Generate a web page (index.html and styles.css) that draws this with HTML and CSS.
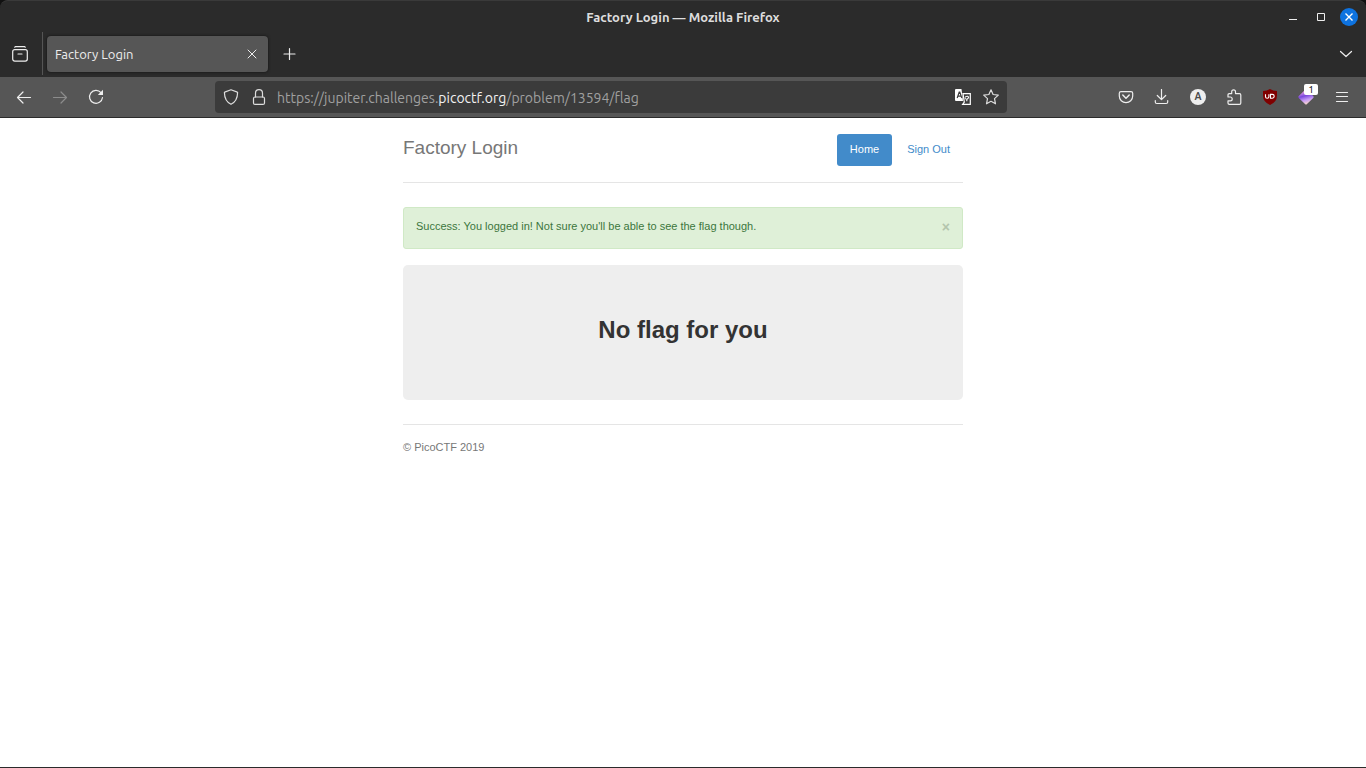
FILE: index.html
```html
<!DOCTYPE html>
<html lang="en">
<head>
<meta charset="utf-8">
<title>Factory Login</title>
<link rel="stylesheet" href="styles.css">
</head>
<body>
<div class="window">
  <div class="chrome">
    <div class="titlebar">
      <span class="titlebar-text">Factory Login — Mozilla Firefox</span>
      <div class="window-controls">
        <button class="win-btn" aria-label="Minimize"><svg width="18" height="18" viewBox="0 0 18 18"><path d="M5 11.500h8" stroke="#eee" fill="none"/></svg></button>
        <button class="win-btn" aria-label="Maximize"><svg width="18" height="18" viewBox="0 0 18 18"><path d="M5.500 5.500h7v7h-7z" stroke="#eee" fill="none"/></svg></button>
        <button class="win-btn win-close" aria-label="Close"><svg width="18" height="18" viewBox="0 0 18 18"><path d="M5.500 5.500l7 7M12.500 5.500l-7 7" stroke="#fff" stroke-width="1.400" fill="none"/></svg></button>
      </div>
    </div>
    <div class="tabs">
      <button class="icon-btn view-btn" aria-label="Recent browsing"><svg class="icon" viewBox="0 0 16 16"><path d="M2.700 1.200l.9-.6h8.800l.9.600"/><rect x=".7" y="3.700" width="14.600" height="11.400" rx="2"/><path d="M6 8h4"/></svg></button>
      <div class="tab">
        <span class="tab-title">Factory Login</span>
        <button class="tab-close" aria-label="Close tab"><svg width="16" height="16" viewBox="0 0 16 16" class="icon thin"><path d="M4 4l8 8M12 4l-8 8"/></svg></button>
      </div>
      <button class="icon-btn new-tab" aria-label="New tab"><svg class="icon" viewBox="0 0 16 16"><path d="M7.500 2.500v11M2 8h11"/></svg></button>
      <button class="icon-btn tab-list" aria-label="List all tabs"><svg class="icon" viewBox="0 0 16 16"><path d="M2.500 5.500l5.500 5 5.500-5"/></svg></button>
    </div>
    <div class="toolbar">
      <button class="icon-btn" aria-label="Back"><svg class="icon" viewBox="0 0 16 16"><path d="M14.500 8.500H1.500M7 3L1.500 8.500 7 14"/></svg></button>
      <button class="icon-btn dim" aria-label="Forward"><svg class="icon" viewBox="0 0 16 16"><path d="M1.500 8.500h13M9 3l5.500 5.500L9 14"/></svg></button>
      <button class="icon-btn" aria-label="Reload"><svg class="icon" viewBox="0 0 16 16"><path d="M13 3.600A6.500 6.500 0 1 0 14.500 8.500"/><path class="solid" d="M15 .8v5.200h-5.200z"/></svg></button>
      <div class="urlbar">
        <button class="url-btn" aria-label="Tracking protection"><svg class="icon" viewBox="0 0 16 16"><path d="M8 .8L14.300 3.100Q14.600 3.200 14.600 3.600C14.500 9 12.500 13.300 8 15.300C3.500 13.300 1.500 9 1.400 3.600Q1.400 3.200 1.700 3.100z"/></svg></button>
        <button class="url-btn" aria-label="Site information"><svg class="icon" viewBox="0 0 16 16"><path d="M4.500 8V4.200a3.500 3.500 0 0 1 7 0V8"/><rect x="2.500" y="8" width="11" height="7.400" rx="1.500"/></svg></button>
        <div class="url" role="textbox" aria-label="Address" contenteditable="true" spellcheck="false">https://jupiter.challenges.<span class="host">picoctf.org</span>/problem/13594/flag</div>
        <button class="url-btn" aria-label="Translate page"><svg width="16" height="16" viewBox="0 0 16 16"><path d="M1 0h5.500l1.500 12H1a1 1 0 0 1-1-1V1a1 1 0 0 1 1-1z" fill="#fff"/><path d="M2.200 9L4.200 3h.6l2 6M2.800 7.200h3.400" stroke="#3b3b3b" stroke-width="1.200" fill="none"/><path d="M8 4.600h7.300v10.800H7.600L9.300 13z" stroke="#fff" stroke-width="1.200" fill="none"/><path d="M10 8.500q.8-1.500 2.500-1.200 1.500.4.800 1.800-.5 1-1.500 1.200v2M9.700 9.800h1.500" stroke="#fff" stroke-width="1.100" fill="none"/></svg></button>
        <button class="url-btn" aria-label="Bookmark this page"><svg class="icon" viewBox="0 0 16 16"><path d="M8 .8l2.100 4.700 5.200.6-3.800 3.500 1 5.200L8 12.300l-4.500 2.500 1-5.200L.7 6.100l5.200-.6z"/></svg></button>
      </div>
      <button class="icon-btn" aria-label="Save to Pocket"><svg class="icon" viewBox="0 0 16 16"><path d="M3 2.600h10a1.700 1.700 0 0 1 1.700 1.700V7a6.700 6.700 0 0 1-13.400 0V4.300A1.700 1.700 0 0 1 3 2.600z"/><path d="M4.800 6L8 9.200 11.200 6" stroke-width="1.500"/></svg></button>
      <button class="icon-btn" aria-label="Downloads"><svg class="icon" viewBox="0 0 16 16"><path d="M7.500.5v10M3.300 6.500l4.200 4.200 4.200-4.200M1.300 11.500v1.500a1.500 1.500 0 0 0 1.500 1.500h9.400a1.500 1.500 0 0 0 1.500-1.500v-1.500"/></svg></button>
      <button class="icon-btn account" aria-label="Account"><span class="avatar">A</span></button>
      <button class="icon-btn" aria-label="Extensions"><svg class="icon" viewBox="0 0 16 16"><path d="M5.700 4.600V2.700a1.900 1.900 0 0 1 3.800 0v1.900h4q1.300 0 1.300 1.300V14q0 1.300-1.300 1.300H3.300q-1.300 0-1.300-1.300v-2.200h2.300a1.900 1.900 0 0 0 0-3.800H2V5.900q0-1.300 1.300-1.300z"/></svg></button>
      <button class="icon-btn" aria-label="uBlock Origin"><svg width="16" height="16" viewBox="0 0 16 16"><path d="M8 0Q11 2 15 2V6.500Q15 13 8 16Q1 13 1 6.500V2Q5 2 8 0z" fill="#800000"/><path d="M3.500 5.200v2.600q0 1.400 1.700 1.400t1.700-1.400V5.200M8.500 5.400v3.800h1.800a1.900 1.900 0 0 0 0-3.800z" stroke="#fff" stroke-width="1.100" fill="none"/></svg></button>
      <button class="icon-btn ext" aria-label="Extension, 1 notification"><svg width="16" height="16" viewBox="0 0 16 16"><defs><linearGradient id="g" gradientUnits="userSpaceOnUse" x1="5" y1="2" x2="9" y2="16"><stop offset="0" stop-color="#f0a4e4"/><stop offset=".35" stop-color="#7a48dc"/><stop offset=".65" stop-color="#c79cf8"/><stop offset="1" stop-color="#ffe0c0"/></linearGradient></defs><path d="M7 .9q1-1 2 0l6.200 6.200q.9.900 0 1.800L9 15.100q-1 1-2 0L.8 8.900q-.9-.9 0-1.800z" fill="url(#g)"/></svg><span class="badge">1</span></button>
      <button class="icon-btn" aria-label="Open menu"><svg class="icon" viewBox="0 0 16 16"><path d="M2.500 3.500h11M2.500 7.500h11M2.500 12.500h11"/></svg></button>
    </div>
  </div>
  <main class="page">
    <div class="container">
      <header class="site-header">
        <h3 class="brand">Factory Login</h3>
        <nav class="pills"><a class="pill active" href="#">Home</a><a class="pill" href="#">Sign Out</a></nav>
      </header>
      <div class="alert" role="alert"><span>Success: You logged in! Not sure you'll be able to see the flag though.</span><button class="alert-close" aria-label="Dismiss">×</button></div>
      <section class="jumbotron"><h1 class="headline">No flag for you</h1></section>
      <footer class="footer">© PicoCTF 2019</footer>
    </div>
  </main>
</div>
</body>
</html>
```
FILE: styles.css
```css
* { box-sizing: border-box; }
body { margin: 0; background: #111; }
button { padding: 0; border: 0; background: none; color: inherit; font: inherit; }
svg { display: block; }

.window {
  display: flex;
  flex-direction: column;
  min-height: 100vh;
  border-bottom: 1px solid #2b2b2b;
}
.chrome {
  font-family: Ubuntu, "Noto Sans", sans-serif;
  color: #eee;
  background: #2b2b2b;
  border-radius: 8px 8px 0 0;
  border-top: 1px solid #3a3a3a;
}
.icon {
  width: 16px;
  height: 16px;
  fill: none;
  stroke: currentColor;
  stroke-width: 1.2;
  stroke-linecap: round;
  stroke-linejoin: round;
}
.thin { stroke-width: 1; }
.solid { fill: currentColor; stroke: none; }

.titlebar {
  display: grid;
  grid-template-columns: 1fr auto 1fr;
  align-items: center;
  height: 31px;
  padding: 0 8px;
}
.titlebar-text { grid-column: 2; color: #ddd; font-size: 13px; font-weight: 600; line-height: 16px; }
.window-controls { display: flex; justify-content: flex-end; gap: 10px; }
.win-btn { width: 18px; height: 18px; }
.win-close { border-radius: 50%; background: #0e73e0; }

.tabs { display: flex; align-items: center; height: 45px; padding: 0 2px 2px; }
.icon-btn {
  position: relative;
  display: flex;
  flex: none;
  align-items: center;
  justify-content: center;
  width: 36px;
  height: 36px;
}
.view-btn { width: 41px; height: 43px; padding-right: 5px; border-right: 1px solid #555; }
.tab {
  display: flex;
  align-items: center;
  justify-content: space-between;
  width: 221px;
  height: 36px;
  margin-left: 4px;
  padding: 0 8px;
  border-radius: 4px;
  background: #565656;
  box-shadow: 0 0 3px #111;
  font-size: 13px;
}
.new-tab { margin-left: 4px; }
.tab-list { margin-left: auto; }

.toolbar {
  display: flex;
  align-items: center;
  height: 41px;
  padding: 0 6px;
  background: #565656;
  border-bottom: 1px solid #2b2b2b;
}
.dim { color: #8c8c8c; }
.urlbar {
  display: flex;
  flex: 1;
  align-items: center;
  height: 32px;
  margin: 0 101px;
  padding: 0 2px;
  border-radius: 4px;
  background: #3b3b3b;
}
.url-btn { display: flex; flex: none; align-items: center; justify-content: center; width: 28px; height: 28px; color: #ddd; }
.url { flex: 1; padding: 2px 0 0 4px; font-size: 14px; color: #a0a0a0; white-space: nowrap; outline: 0; }
.host { color: #f2f2f2; }
.avatar {
  width: 16px;
  border-radius: 50%;
  background: #eee;
  color: #4a4a4a;
  font-size: 10px;
  font-weight: 700;
  line-height: 16px;
  text-align: center;
}
.badge {
  position: absolute;
  top: 5px;
  right: 6px;
  width: 14px;
  border-radius: 2px;
  background: #fff;
  color: #000;
  font-size: 10px;
  line-height: 11px;
  text-align: center;
}

.page {
  flex: 1;
  padding: 16px;
  background: #fff;
  color: #333;
  font-family: "Helvetica Neue", Helvetica, "Liberation Sans", Arial, sans-serif;
  font-size: 11px;
  line-height: 16px;
}
.container { max-width: 560px; margin: 0 auto; }
.site-header {
  display: flex;
  justify-content: space-between;
  margin-bottom: 24px;
  padding-bottom: 16px;
  border-bottom: 1px solid #e5e5e5;
}
.brand { margin: 0; color: #777; font-size: 19px; font-weight: 400; line-height: 28px; }
.pills { display: flex; gap: 2px; }
.pill { padding: 7px 13px 9px; border-radius: 3px; color: #428bca; text-decoration: none; }
.active { background: #428bca; color: #fff; }
.alert {
  display: flex;
  justify-content: space-between;
  margin-bottom: 16px;
  padding: 10px 12px 14px;
  border: 1px solid #d0e9c6;
  border-radius: 3px;
  background: #dff0d8;
  color: #3c763d;
}
.alert-close { height: 18px; margin-bottom: -2px; color: #b3c5ad; font-size: 14px; font-weight: 700; line-height: 18px; }
.jumbotron { padding: 49px 48px 54px; border-radius: 5px; background: #eee; text-align: center; }
.headline { margin: 0; font-size: 24px; line-height: 32px; }
.footer { margin-top: 24px; padding-top: 14px; border-top: 1px solid #e5e5e5; color: #777; }
```
